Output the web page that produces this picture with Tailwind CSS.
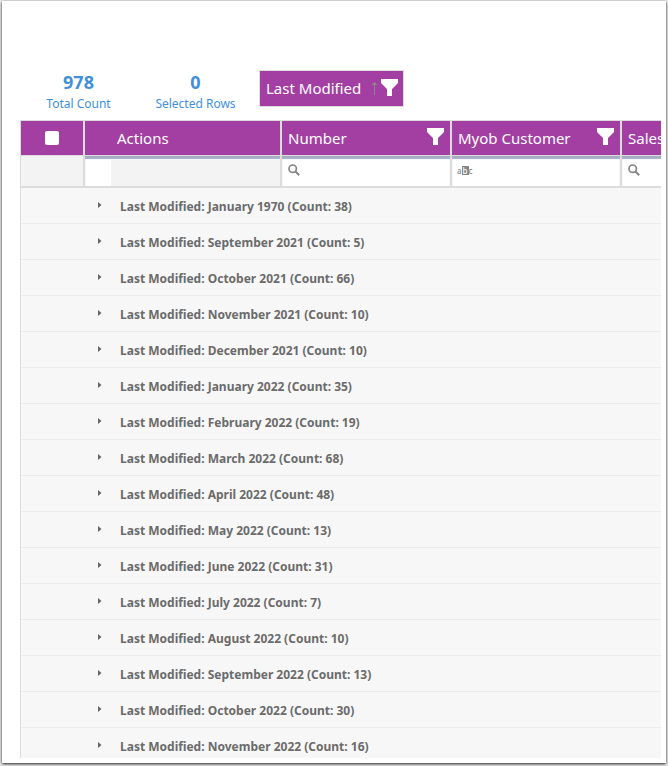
<!doctype html>
<html lang="en">
  <head>
    <meta charset="UTF-8" />
    <meta name="viewport" content="width=device-width, initial-scale=1.0" />
    <title>Grouped Orders Grid</title>
    <script src="https://cdn.jsdelivr.net/npm/@tailwindcss/browser@4"></script>
  </head>
  <body class="h-screen overflow-hidden bg-[#f0f0f0] px-[2px] pt-px pb-[3px] font-['Noto_Sans','Open_Sans',sans-serif]">
    <!-- Shared icons -->
    <svg class="hidden">
      <symbol id="funnel" viewBox="0 0 17 17">
        <path d="M0 0H17V4L11 10V17H6V10L0 4Z" fill="currentColor" />
      </symbol>
      <symbol id="search" viewBox="0 0 12 12">
        <circle cx="4.700" cy="4.700" r="3.700" fill="none" stroke="currentColor" stroke-width="1.700" />
        <path d="M7.500 7.500L11.200 11.200" stroke="currentColor" stroke-width="2" />
      </symbol>
    </svg>

    <main class="flex h-full flex-col bg-white pt-[69px] pr-[5px] pb-[5px] pl-[18px] shadow-[0_1px_3px_rgba(0,0,0,0.9)]">
      <!-- Counters and grouping chip -->
      <div class="flex h-[50px] shrink-0 items-start">
        <div class="w-[117px] text-center text-[#3f8fdd]">
          <div class="text-[18px] leading-6 font-bold">978</div>
          <div class="text-[12px] leading-5">Total Count</div>
        </div>
        <div class="w-[117px] text-center text-[#3f8fdd]">
          <div class="text-[18px] leading-6 font-bold">0</div>
          <div class="text-[12px] leading-5">Selected Rows</div>
        </div>
        <button class="ml-[5px] flex h-[37px] w-[145px] items-center border border-[#dcdcdc] bg-[#a33fa2] pr-[5px] pl-[6px] text-[15px] whitespace-nowrap text-white">
          Last Modified
          <svg class="ml-auto h-[13px] w-[5px] text-[#888888]" viewBox="0 0 5 13" aria-hidden="true">
            <path d="M2 0H3V1H4V2H5V3H3V13H2V3H0V2H1V1H2Z" fill="currentColor" />
          </svg>
          <svg class="mb-[3px] ml-[4px] h-[17px] w-[17px]" aria-hidden="true"><use href="#funnel" /></svg>
        </button>
      </div>

      <!-- Grid -->
      <div class="min-h-0 flex-1 overflow-hidden">
        <table class="w-[772px] table-fixed border-separate border-spacing-0 border-l border-[#dcdcdc] text-left">
          <colgroup>
            <col class="w-[64px]" />
            <col class="w-[197px]" />
            <col class="w-[170px]" />
            <col class="w-[170px]" />
            <col class="w-[170px]" />
          </colgroup>
          <thead>
            <tr class="h-[36px] bg-[#a33fa2] text-[15px] text-white">
              <th class="border-y border-r-2 border-[#dcdcdc] p-0">
                <input type="checkbox" aria-label="Select all rows" class="mx-auto block h-[14px] w-[14px] appearance-none rounded-xs bg-white" />
              </th>
              <th class="border-y border-r-2 border-[#dcdcdc] py-0 pl-8 font-normal">Actions</th>
              <th class="border-y border-r-2 border-[#dcdcdc] px-[6px] py-0 font-normal">
                <div class="flex items-center justify-between">
                  Number
                  <button aria-label="Filter Number" class="mb-[3px]"><svg class="block h-[17px] w-[17px]"><use href="#funnel" /></svg></button>
                </div>
              </th>
              <th class="border-y border-r-2 border-[#dcdcdc] px-[6px] py-0 font-normal">
                <div class="flex items-center justify-between">
                  Myob Customer
                  <button aria-label="Filter Myob Customer" class="mb-[3px]"><svg class="block h-[17px] w-[17px]"><use href="#funnel" /></svg></button>
                </div>
              </th>
              <th class="border-y border-r-2 border-[#dcdcdc] px-[6px] py-0 font-normal">Sales</th>
            </tr>
            <tr class="h-[32px] text-[#858585]">
              <td class="border-r-2 border-b-2 border-[#dcdcdc] bg-[#f3f3f3] p-0"></td>
              <td class="border-r-2 border-b-2 border-[#dcdcdc] bg-white p-0 shadow-[inset_0_3px_1px_#a5aec2]">
                <div class="mt-[4px] ml-[26px] h-[26px] bg-[#f3f3f3]"></div>
              </td>
              <td class="border-r-2 border-b-2 border-[#dcdcdc] bg-white p-0 pb-[2px] shadow-[inset_0_3px_1px_#a5aec2]">
                <label class="flex items-center gap-1 pl-[6px]">
                  <svg class="h-[12px] w-[12px] shrink-0"><use href="#search" /></svg>
                  <input type="text" aria-label="Search Number" class="h-5 w-full min-w-0 bg-transparent text-[12px] outline-none" />
                </label>
              </td>
              <td class="border-r-2 border-b-2 border-[#dcdcdc] bg-white p-0 pb-[2px] shadow-[inset_0_3px_1px_#a5aec2]">
                <label class="flex items-center gap-1 pl-[5px]">
                  <span class="flex items-center text-[8px] leading-[9px] font-medium">a<span class="bg-[#858585] px-px text-white">b</span>c</span>
                  <input type="text" aria-label="Search Myob Customer" class="h-5 w-full min-w-0 bg-transparent text-[12px] outline-none" />
                </label>
              </td>
              <td class="border-r-2 border-b-2 border-[#dcdcdc] bg-white p-0 pb-[2px] shadow-[inset_0_3px_1px_#a5aec2]">
                <label class="flex items-center gap-1 pl-[6px]">
                  <svg class="h-[12px] w-[12px] shrink-0"><use href="#search" /></svg>
                  <input type="text" aria-label="Search Sales" class="h-5 w-full min-w-0 bg-transparent text-[12px] outline-none" />
                </label>
              </td>
            </tr>
          </thead>
          <tbody id="groupRows"></tbody>
        </table>
      </div>
    </main>

    <script>
      const groups = [
        ["January 1970", 38],
        ["September 2021", 5],
        ["October 2021", 66],
        ["November 2021", 10],
        ["December 2021", 10],
        ["January 2022", 35],
        ["February 2022", 19],
        ["March 2022", 68],
        ["April 2022", 48],
        ["May 2022", 13],
        ["June 2022", 31],
        ["July 2022", 7],
        ["August 2022", 10],
        ["September 2022", 13],
        ["October 2022", 30],
        ["November 2022", 16],
      ];

      document.getElementById("groupRows").innerHTML = groups
        .map(
          ([month, count]) => `
            <tr class="h-[36px] bg-[#f7f7f7] text-[12px] leading-5 font-bold text-[#6b6b6b]">
              <td colspan="5" class="border-b border-[#ececec] p-0 pt-[2px]">
                <div class="flex items-center">
                  <button aria-label="Expand ${month}" class="mb-[4px] ml-[77px] w-[22px]">
                    <svg class="block h-[6px] w-[4px]" viewBox="0 0 4 6"><path d="M0 0L3.500 3L0 6Z" fill="#666" /></svg>
                  </button>
                  <span>Last Modified: ${month} (Count: ${count})</span>
                </div>
              </td>
            </tr>`
        )
        .join("");
    </script>
  </body>
</html>
